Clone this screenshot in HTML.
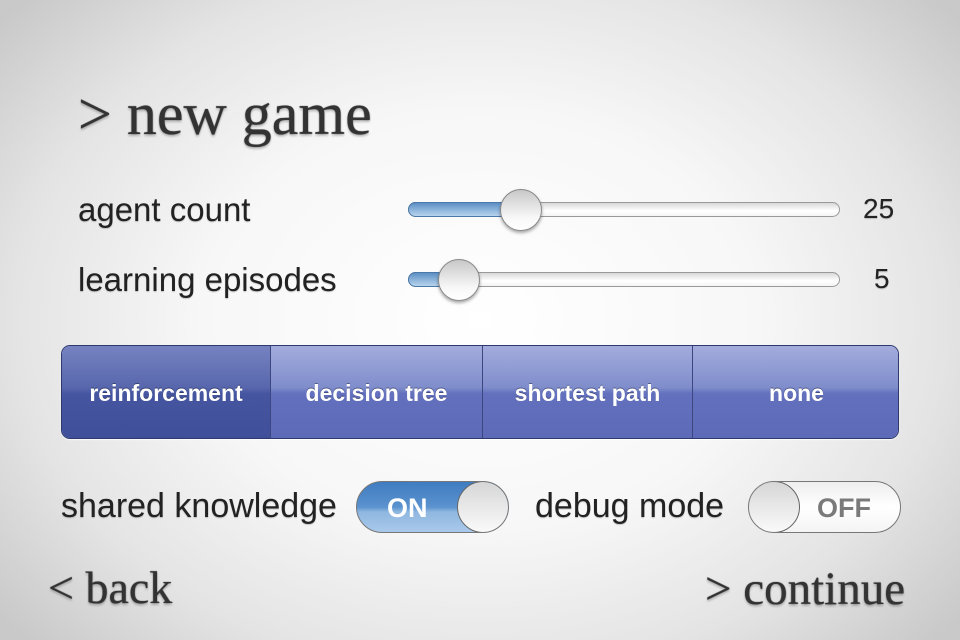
<!DOCTYPE html><html><head><style>
*{margin:0;padding:0;box-sizing:border-box}
body{width:960px;height:640px;overflow:hidden;position:relative;background:radial-gradient(ellipse 620px 470px at 480px 320px,#fff 0%,#f7f7f7 45%,#e4e4e4 75%,#c9c9c9 100%);font-family:"Liberation Sans",sans-serif;color:#222}
.t{position:absolute;white-space:nowrap}
.ser{font-family:"Liberation Serif",serif;color:#333;text-shadow:0 2px 2px rgba(0,0,0,.25),0 0 1px #333}
.lab{font-size:33px;color:#222;text-shadow:0 1px 1px rgba(0,0,0,.2)}
.track{position:absolute;height:15px;border-radius:8px;border:1px solid #999;background:linear-gradient(#d8d8d8,#fff 60%,#f4f4f4)}
.fill{position:absolute;height:15px;border-radius:8px 0 0 8px;border:1px solid #4a78a8;background:linear-gradient(#5d8fc4,#9cc0e2 70%,#b8d3ec)}
.thumb{position:absolute;width:42px;height:42px;border-radius:50%;border:1px solid #888;background:linear-gradient(#c8c8c8,#f8f8f8 70%,#fff);box-shadow:0 2px 3px rgba(0,0,0,.35)}
.seg{position:absolute;left:61px;top:345px;width:838px;height:94px;border-radius:9px;overflow:hidden;border:1px solid #2c3a70;display:flex;box-shadow:0 1px 1px rgba(255,255,255,.8)}
.seg div{flex:none;height:100%;display:flex;align-items:center;justify-content:center;padding-top:2px;color:#fff;font-weight:bold;font-size:23px;text-shadow:0 -1px 0 rgba(0,0,0,.35);background:linear-gradient(#a3acdc,#7f8dcc 45%,#6270bd 52%,#5d6ab8);border-left:1px solid #3b477e}
.seg div.sel{background:linear-gradient(#7682c0,#5867ad 45%,#4555a0 52%,#3f4f9a);border-left:none}
.tog{position:absolute;width:153px;height:52px;border-radius:26px;border:1px solid #777;overflow:hidden;font-weight:bold;font-size:27px}
.knob{position:absolute;top:-1px;width:52px;height:52px;border-radius:50%;border:1px solid #666;background:linear-gradient(#d6d6d6,#fafafa)}
</style></head><body>
<div class="t ser" style="left:78px;top:80px;font-size:60px">&gt; new game</div>
<div class="t lab" style="left:78px;top:191px">agent count</div>
<div class="t lab" style="left:78px;top:261px">learning episodes</div>
<div class="track" style="left:408px;top:202px;width:432px"></div>
<div class="fill" style="left:408px;top:202px;width:115px"></div>
<div class="thumb" style="left:500px;top:189px"></div>
<div class="t lab" style="left:863px;top:193px;font-size:28px">25</div>
<div class="track" style="left:408px;top:272px;width:432px"></div>
<div class="fill" style="left:408px;top:272px;width:52px"></div>
<div class="thumb" style="left:438px;top:259px"></div>
<div class="t lab" style="left:874px;top:263px;font-size:28px">5</div>
<div class="seg"><div class="sel" style="width:208px">reinforcement</div><div style="width:212px">decision tree</div><div style="width:210px">shortest path</div><div style="width:208px">none</div></div>
<div class="t lab" style="left:61px;top:487px;font-size:34px">shared knowledge</div>
<div class="tog" style="left:356px;top:481px;background:linear-gradient(#3f7cc0,#5b92cf 50%,#8fb7e0 60%,#a9c9ea);color:#fff"><span style="position:absolute;left:30px;top:11px">ON</span><div class="knob" style="left:100px"></div></div>
<div class="t lab" style="left:535px;top:487px;font-size:34px">debug mode</div>
<div class="tog" style="left:748px;top:481px;background:linear-gradient(#eee,#fff 50%,#f4f4f4);color:#7a7a7a"><span style="position:absolute;left:68px;top:11px">OFF</span><div class="knob" style="left:-1px"></div></div>
<div class="t ser" style="left:48px;top:561px;font-size:46px">&lt; back</div>
<div class="t ser" style="left:705px;top:562px;font-size:47px">&gt; continue</div>
</body></html>
